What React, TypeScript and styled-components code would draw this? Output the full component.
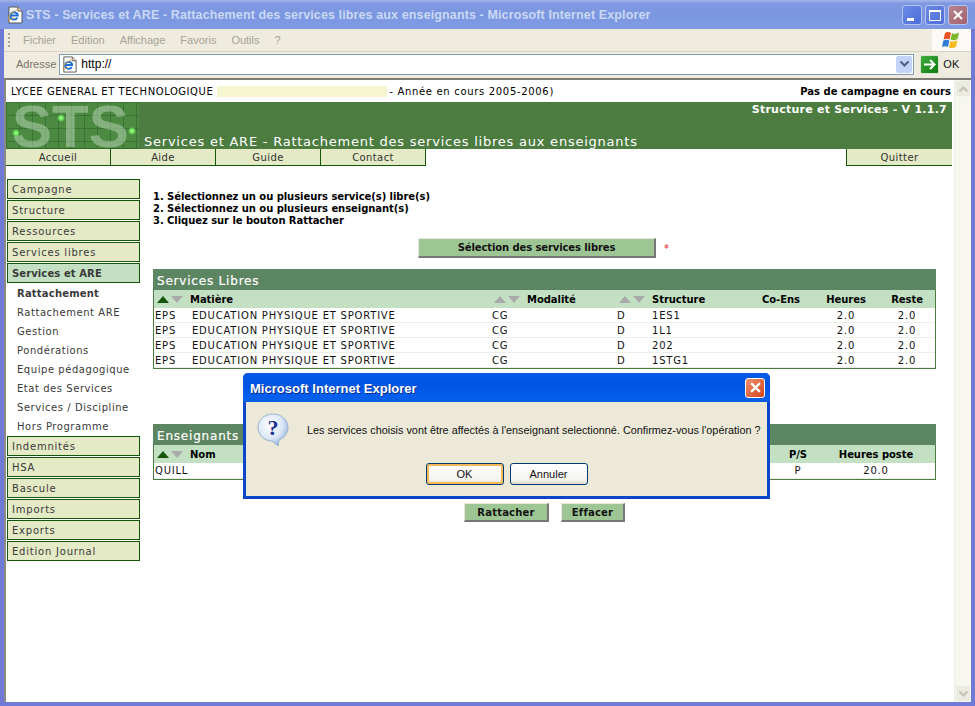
import React from "react";
import styled, { createGlobalStyle } from "styled-components";

const Global = createGlobalStyle`
  html, body { margin: 0; padding: 0; background: #fff; }
  * { box-sizing: border-box; }
`;

const PAGE_FONT = `"DejaVu Sans", Verdana, sans-serif`;
const UI_FONT = `"Liberation Sans", Arial, sans-serif`;

const Frame = styled.div`
  width: 975px;
  height: 706px;
  display: flex;
  flex-direction: column;
  background: #6f7ad6;
  padding: 0 4px 4px 4px;
  overflow: hidden;
  position: relative;
  font-family: ${PAGE_FONT};
`;

const TitleBar = styled.div`
  height: 29px;
  margin: 0 -4px;
  padding: 0 7px 0 6px;
  display: flex;
  align-items: center;
  background: linear-gradient(180deg, #a6b6ec 0, #7f98e2 12%, #7b97e0 50%, #7e9ae4 85%, #8199e2 100%);
`;

const TitleText = styled.div`
  margin-left: 2px;
  flex: 1;
  font: bold 12.5px ${UI_FONT};
  letter-spacing: 0.12px;
  color: #cbd8f4;
  white-space: nowrap;
`;

const WinControls = styled.div`
  display: flex;
  gap: 3px;
`;

const WinButton = styled.div<{ $close?: boolean }>`
  width: 20px;
  height: 20px;
  border: 1px solid #b4c4f2;
  border-radius: 3px;
  background: ${(p) => (p.$close ? "linear-gradient(135deg, #b5858f, #a4616f)" : "linear-gradient(135deg, #6a8be4, #4d6edb)")};
  display: flex;
  align-items: center;
  justify-content: center;
`;

const MenuBar = styled.div`
  height: 23px;
  display: flex;
  align-items: stretch;
  background: #efebde;
  border-bottom: 1px solid #d8d4c4;
`;

const Grip = styled.div`
  width: 2px;
  margin: 4px 0 4px 4px;
  background: repeating-linear-gradient(180deg, #a9a697 0 2px, transparent 2px 4px);
`;

const MenuItems = styled.div`
  flex: 1;
  display: flex;
  align-items: center;
  gap: 15px;
  padding-left: 13px;
  font: 11px ${UI_FONT};
  color: #a6a396;
`;

const FlagPane = styled.div`
  width: 39px;
  background: #fbfaf6;
  display: flex;
  align-items: center;
  justify-content: center;
`;

const AddressBar = styled.div`
  height: 26px;
  padding-bottom: 2px;
  display: flex;
  align-items: center;
  background: #efebde;
  font: 11px ${UI_FONT};
  color: #77756a;
`;

const AddressLabel = styled.span`
  margin: 0 3px 0 6px;
`;

const AddressField = styled.div`
  width: 855px;
  height: 21px;
  background: #fff;
  border: 1px solid #7f9db9;
  display: flex;
  align-items: center;
  padding-left: 1px;
  gap: 3px;
  color: #000;
  font-size: 12px;
`;

const UrlText = styled.span`
  flex: 1;
`;

const ComboArrow = styled.div`
  width: 16px;
  height: 17px;
  margin-right: 1px;
  background: #c3d3f8;
  border-radius: 2px;
  display: flex;
  align-items: center;
  justify-content: center;
`;

const GoButton = styled.div`
  margin-left: 6px;
  width: 19px;
  height: 19px;
  border-radius: 2px;
  background: linear-gradient(135deg, #3fae3f, #117a11);
  border: 1px solid #d6e6cd;
  display: flex;
  align-items: center;
  justify-content: center;
`;

const GoLabel = styled.span`
  margin-left: 4px;
  color: #111;
`;

const Viewport = styled.div`
  flex: 1;
  display: flex;
  min-height: 0;
  border-top: 2px solid #7c7b74;
  border-left: 2px solid #8a8a84;
  background: #fff;
`;

const Page = styled.div`
  flex: 1;
  min-width: 0;
  padding-right: 2px;
  background: #fff;
  display: flex;
  flex-direction: column;
`;

const InfoRow = styled.div`
  height: 22px;
  display: flex;
  align-items: center;
  padding-left: 5px;
  padding-right: 1px;
  font-size: 10px;
  letter-spacing: 0.55px;
  color: #000;
  white-space: nowrap;
`;

const Highlight = styled.span`
  width: 170px;
  height: 11px;
  background: #f5f6cf;
  margin: 0 2px 0 4px;
`;

const YearText = styled.span`
  letter-spacing: 0.68px;
`;

const CampaignNote = styled.span`
  margin-left: auto;
  font-weight: bold;
  letter-spacing: 0.02px;
`;

const Banner = styled.div`
  height: 47px;
  background: #4c7c40;
  display: flex;
  color: #fff;
`;

const LogoSvg = styled.svg`
  flex-shrink: 0;
  display: block;
`;

const BannerBody = styled.div`
  flex: 1;
  display: flex;
  flex-direction: column;
  padding: 1px 5px 0 5px;
`;

const Version = styled.div`
  text-align: right;
  font-size: 11px;
  font-weight: bold;
  letter-spacing: 0.25px;
  line-height: 13px;
`;

const BannerTitle = styled.div`
  margin-top: auto;
  font-size: 13px;
  line-height: 15px;
  letter-spacing: 0.77px;
  white-space: nowrap;
`;

const Nav = styled.div`
  height: 17px;
  display: flex;
  justify-content: space-between;
`;

const NavGroup = styled.div`
  display: flex;
`;

const NavTab = styled.div`
  width: 105px;
  background: #e4eac5;
  border-right: 1px solid #14550a;
  border-bottom: 1px solid #14550a;
  text-align: center;
  font-size: 10px;
  line-height: 18px;
  letter-spacing: 0.4px;
  color: #333;
`;

const QuitTab = styled(NavTab)`
  width: 106px;
  border-left: 1px solid #14550a;
  border-right: 0;
`;

const Columns = styled.div`
  flex: 1;
  display: flex;
`;

const Sidebar = styled.div`
  width: 133px;
  margin-left: 1px;
  padding-top: 13px;
  display: flex;
  flex-direction: column;
`;

const SideItem = styled.div<{ $active?: boolean }>`
  height: 20px;
  margin-bottom: 1px;
  border: 1px solid #14550a;
  background: ${(p) => (p.$active ? "#c3e0c3" : "#e4eac5")};
  padding-left: 4px;
  font-size: 10px;
  line-height: 20px;
  letter-spacing: ${(p) => (p.$active ? "0.1px" : "0.78px")};
  font-weight: ${(p) => (p.$active ? "bold" : "normal")};
  color: #3a3a3a;
  white-space: nowrap;
`;

const SubItem = styled.div<{ $active?: boolean }>`
  height: 19px;
  padding-left: 10px;
  font-size: 10px;
  line-height: 19px;
  letter-spacing: ${(p) => (p.$active ? "0.2px" : "0.55px")};
  font-weight: ${(p) => (p.$active ? "bold" : "normal")};
  color: #3a3a3a;
  white-space: nowrap;
`;

const Main = styled.div`
  width: 783px;
  margin-left: 13px;
  display: flex;
  flex-direction: column;
`;

const Steps = styled.div`
  margin-top: 25px;
  font-size: 10px;
  line-height: 12px;
  font-weight: bold;
  letter-spacing: -0.06px;
  color: #000;
`;

const SelectRow = styled.div`
  margin-top: 11px;
  padding-left: 265px;
  display: flex;
  align-items: center;
`;

const ActionButton = styled.div`
  background: #9ec695;
  border-top: 1px solid #e8e8e0;
  border-left: 1px solid #e8e8e0;
  border-right: 2px solid #777;
  border-bottom: 2px solid #777;
  font-size: 10px;
  font-weight: bold;
  letter-spacing: -0.1px;
  text-align: center;
  color: #111;
  white-space: nowrap;
`;

const SelectButton = styled(ActionButton)`
  width: 238px;
  height: 20px;
  line-height: 17px;
`;

const Star = styled.span`
  margin-left: 8px;
  color: #e01818;
  font-size: 10px;
`;

const Panel = styled.div<{ $top: number }>`
  margin-top: ${(p) => p.$top}px;
  border: 1px solid #4c7c40;
  border-top: 0;
`;

const PanelHead = styled.div`
  height: 21px;
  background: #5c8562;
  color: #fff;
  padding-left: 4px;
  font-size: 12px;
  line-height: 24px;
  letter-spacing: 0.8px;
  -webkit-text-stroke: 0.2px #fff;
  margin: 0 -1px;
`;

const serviceGrid = "36px 302px 125px 35px 98px 62px 68px 54px";
const teacherGrid = "36px 580px 56px 100px 10px";

const TableRow = styled.div<{ $grid: string }>`
  display: grid;
  grid-template-columns: ${(p) => p.$grid};
  height: 15px;
  border-bottom: 1px solid #eceeea;
  align-items: center;
  font-size: 10px;
  letter-spacing: 0.79px;
  color: #111;
  white-space: nowrap;
`;

const TeacherRow = styled(TableRow)`
  height: 16px;
`;

const HeaderRow = styled(TableRow)`
  height: 18px;
  background: #c3e0c3;
  border-bottom: 0;
  font-weight: bold;
  letter-spacing: -0.05px;
  color: #000;
`;

const Cell = styled.div<{ $center?: boolean; $pad?: number }>`
  text-align: ${(p) => (p.$center ? "center" : "left")};
  padding-left: ${(p) => p.$pad ?? 0}px;
`;

const Sorter = styled.div<{ $pad?: number }>`
  display: flex;
  gap: 2px;
  padding-left: ${(p) => p.$pad ?? 3}px;
`;

const Triangle = styled.i<{ $down?: boolean; $on?: boolean }>`
  width: 0;
  height: 0;
  border-left: 6.5px solid transparent;
  border-right: 6.5px solid transparent;
  ${(p) =>
    p.$down
      ? `border-top: 7px solid ${p.$on ? "#14550a" : "#aaa"};`
      : `border-bottom: 7px solid ${p.$on ? "#14550a" : "#aaa"};`}
`;

const CellWithSort = styled.div`
  display: flex;
  align-items: center;
`;

const BottomActions = styled.div`
  margin-top: 23px;
  padding-left: 311px;
  display: flex;
  gap: 12px;
`;

const RattachButton = styled(ActionButton)<{ $w: number }>`
  width: ${(p) => p.$w}px;
  height: 19px;
  line-height: 17px;
  letter-spacing: 0.2px;
`;

const Scrollbar = styled.div`
  width: 17px;
  background: #f8f7ef;
  border-left: 1px solid #eeede4;
  display: flex;
  flex-direction: column;
  justify-content: space-between;
`;

const ScrollButton = styled.div`
  height: 17px;
  background: #ecebe2;
  border: 1px solid #f6f6f0;
  border-radius: 2px;
  display: flex;
  align-items: center;
  justify-content: center;
`;

const Dialog = styled.div`
  position: absolute;
  left: 243px;
  top: 373px;
  width: 527px;
  height: 126px;
  background: #0a4fd8;
  border: 3px solid #0a46c8;
  border-top: 0;
  border-radius: 5px 5px 0 0;
  display: flex;
  flex-direction: column;
  font-family: ${UI_FONT};
`;

const DialogTitle = styled.div`
  height: 29px;
  margin: 0 -3px;
  padding: 2px 5px 0 7px;
  border-radius: 5px 5px 0 0;
  background: linear-gradient(180deg, #0a5ae8 0, #0358e6 10%, #0054e3 50%, #0560ee 85%, #0a5ce0 100%);
  display: flex;
  align-items: center;
  justify-content: space-between;
  color: #fff;
  font: bold 13px ${UI_FONT};
  letter-spacing: 0.02px;
  text-shadow: 1px 1px 0 #0a2f90;
`;

const DialogClose = styled.div`
  width: 20px;
  height: 20px;
  margin-top: -2px;
  border: 1px solid #fff;
  border-radius: 3px;
  background: linear-gradient(135deg, #ee9070, #d5431a);
  display: flex;
  align-items: center;
  justify-content: center;
`;

const DialogBody = styled.div`
  flex: 1;
  background: #ece9d8;
  display: flex;
  flex-direction: column;
`;

const Message = styled.div`
  display: flex;
  align-items: center;
  padding-left: 11px;
  height: 56px;
  font-size: 10.85px;
  color: #111;
  white-space: nowrap;
`;

const QuestionBox = styled.div`
  flex-shrink: 0;
  width: 33px;
  height: 34px;
`;

const MessageText = styled.span`
  margin-left: 17px;
`;

const DialogButtons = styled.div`
  display: flex;
  justify-content: center;
  gap: 6px;
  margin-top: 5px;
`;

const XpButton = styled.div<{ $focus?: boolean }>`
  width: 78px;
  height: 22px;
  border: 1px solid #003c74;
  border-radius: 3px;
  background: linear-gradient(180deg, #fff, #f4f3ee 80%, #dcd8cc);
  font-size: 11px;
  line-height: 20px;
  text-align: center;
  color: #111;
  box-shadow: ${(p) => (p.$focus ? "inset 0 0 0 2px #f6b956" : "none")};
`;

function StsLogo() {
  return (
    <LogoSvg width="133" height="47" viewBox="0 0 133 47">
      <defs>
        <pattern id="stsgrid" width="13" height="13" patternUnits="userSpaceOnUse">
          <rect width="13" height="13" fill="#4c8a42" />
          <path d="M0 .5h13M.5 0v13" stroke="#3a7434" strokeWidth="1" />
        </pattern>
        <radialGradient id="stsdot">
          <stop offset="0" stopColor="#a8ff90" />
          <stop offset="0.5" stopColor="#70e860" />
          <stop offset="1" stopColor="#70e860" stopOpacity="0" />
        </radialGradient>
      </defs>
      <rect width="133" height="47" fill="url(#stsgrid)" />
      <text x="6" y="45" fontFamily="Liberation Sans, Arial, sans-serif" fontWeight="bold" fontSize="60" fill="#bed7b9" fillOpacity="0.5">STS</text>
      <circle cx="55" cy="16" r="4" fill="url(#stsdot)" />
      <circle cx="10" cy="31" r="4" fill="url(#stsdot)" />
      <circle cx="126" cy="29" r="4" fill="url(#stsdot)" />
      <path d="M0 46.500h133" stroke="#2f6a28" />
    </LogoSvg>
  );
}

function IeIcon({ size = 18 }: { size?: number }) {
  return (
    <svg width={size} height={size} viewBox="0 0 18 18">
      <path d="M3 1h9l4 4v12H3z" fill="#fff" stroke="#555" strokeWidth="1" />
      <path d="M12 1v4h4" fill="#ddd" stroke="#555" strokeWidth="1" />
      <path d="M4.200 9.600h7.600c0-3-4.600-4.600-6.600-2-1.900 2.600-.4 6 2.600 6 1.600 0 3-.8 3.600-2" fill="none" stroke="#1e6fd8" strokeWidth="2" />
      <path d="M2 13c1-4 6-9 11-9.600M1.600 14c.6 1.400 4-1 6-3" fill="none" stroke="#e0a030" strokeWidth="0.9" />
    </svg>
  );
}

function FlagIcon() {
  return (
    <svg width="21" height="18" viewBox="0 0 21 18">
      <path d="M4 2c2.400-1.400 4.200-1 6 0L8.600 8.500c-1.800-1-3.600-1.200-6 0z" fill="#e8501f" />
      <path d="M11 2.200c2 1 4 1 7-.6l-1.400 6.400c-2.800 1.400-4.600 1.600-7 .6z" fill="#7cb82a" />
      <path d="M2.400 9.500c2.200-1.200 4-1 6 0L7 16c-1.800-1-3.600-1.200-6 0z" fill="#2f7fd8" />
      <path d="M9.400 9.900c2.400 1 4.200.8 7-.6L15 15.800c-2.800 1.400-4.600 1.600-7 .6z" fill="#f5b81f" />
    </svg>
  );
}

const questionFont = `"Liberation Serif", serif`;

function QuestionIcon() {
  return (
    <svg width="33" height="34" viewBox="0 0 33 34">
      <defs>
        <radialGradient id="qb" cx="0.4" cy="0.35" r="0.7">
          <stop offset="0" stopColor="#ffffff" />
          <stop offset="0.6" stopColor="#dbe7f8" />
          <stop offset="1" stopColor="#8fb0dc" />
        </radialGradient>
      </defs>
      <path d="M16 1C7.500 1 1 7 1 14.500S7.500 28 15 28l6 5 1-6c5.500-2 9-7 9-12.500C31 7 24.500 1 16 1z" fill="url(#qb)" stroke="#9db3cf" strokeWidth="1" />
      <text x="16" y="22" textAnchor="middle" fontFamily={questionFont} fontWeight="bold" fontSize="22" fill="#1c2f90">?</text>
    </svg>
  );
}

const Chevron = ({ up, color }: { up?: boolean; color: string }) => (
  <svg width="11" height="8" viewBox="0 0 11 8">
    <path d={up ? "M1.500 6.500L5.500 2.500L9.500 6.500" : "M1.500 1.500L5.500 5.500L9.500 1.500"} fill="none" stroke={color} strokeWidth="2.200" />
  </svg>
);

const XMark = ({ size = 10, color = "#fff" }: { size?: number; color?: string }) => (
  <svg width={size} height={size} viewBox="0 0 10 10">
    <path d="M1 1L9 9M9 1L1 9" stroke={color} strokeWidth="2" />
  </svg>
);

const services = ["1ES1", "1L1", "202", "1STG1"];
const topMenu = ["Campagne", "Structure", "Ressources", "Services libres"];
const subMenu = ["Rattachement ARE", "Gestion", "Pondérations", "Equipe pédagogique", "Etat des Services", "Services / Discipline", "Hors Programme"];
const bottomMenu = ["Indemnités", "HSA", "Bascule", "Imports", "Exports", "Edition Journal"];

export default function App() {
  return (
    <>
      <Global />
      <Frame>
        <TitleBar>
          <IeIcon />
          <TitleText>STS - Services et ARE - Rattachement des services libres aux enseignants - Microsoft Internet Explorer</TitleText>
          <WinControls>
            <WinButton>
              <svg width="12" height="12" viewBox="0 0 12 12"><rect x="1" y="9" width="7" height="3" fill="#fff" /></svg>
            </WinButton>
            <WinButton>
              <svg width="12" height="12" viewBox="0 0 12 12"><path d="M.5 2.500h11v9H.5z" fill="none" stroke="#fff" /><rect x="0" y="1" width="12" height="2" fill="#fff" /></svg>
            </WinButton>
            <WinButton $close><XMark /></WinButton>
          </WinControls>
        </TitleBar>
        <MenuBar>
          <Grip />
          <MenuItems>
            <span>Fichier</span><span>Edition</span><span>Affichage</span><span>Favoris</span><span>Outils</span><span>?</span>
          </MenuItems>
          <FlagPane><FlagIcon /></FlagPane>
        </MenuBar>
        <AddressBar>
          <Grip />
          <AddressLabel>Adresse</AddressLabel>
          <AddressField>
            <IeIcon size={17} />
            <UrlText>http://</UrlText>
            <ComboArrow><Chevron color="#4d6185" /></ComboArrow>
          </AddressField>
          <GoButton>
            <svg width="13" height="13" viewBox="0 0 13 13"><path d="M1 6.500h10M7 2l4.500 4.500L7 11" fill="none" stroke="#fff" strokeWidth="2" /></svg>
          </GoButton>
          <GoLabel>OK</GoLabel>
        </AddressBar>
        <Viewport>
          <Page>
            <InfoRow>
              LYCEE GENERAL ET TECHNOLOGIQUE
              <Highlight />
              <YearText>- Année en cours 2005-2006)</YearText>
              <CampaignNote>Pas de campagne en cours</CampaignNote>
            </InfoRow>
            <Banner>
              <StsLogo />
              <BannerBody>
                <Version>Structure et Services - V 1.1.7</Version>
                <BannerTitle>Services et ARE - Rattachement des services libres aux enseignants</BannerTitle>
              </BannerBody>
            </Banner>
            <Nav>
              <NavGroup>
                <NavTab>Accueil</NavTab>
                <NavTab>Aide</NavTab>
                <NavTab>Guide</NavTab>
                <NavTab>Contact</NavTab>
              </NavGroup>
              <QuitTab>Quitter</QuitTab>
            </Nav>
            <Columns>
              <Sidebar>
                {topMenu.map((m) => <SideItem key={m}>{m}</SideItem>)}
                <SideItem $active>Services et ARE</SideItem>
                <div>
                  <SubItem $active>Rattachement</SubItem>
                  {subMenu.map((m) => <SubItem key={m}>{m}</SubItem>)}
                </div>
                {bottomMenu.map((m) => <SideItem key={m}>{m}</SideItem>)}
              </Sidebar>
              <Main>
                <Steps>
                  <div>1. Sélectionnez un ou plusieurs service(s) libre(s)</div>
                  <div>2. Sélectionnez un ou plusieurs enseignant(s)</div>
                  <div>3. Cliquez sur le bouton Rattacher</div>
                </Steps>
                <SelectRow>
                  <SelectButton>Sélection des services libres</SelectButton>
                  <Star>*</Star>
                </SelectRow>
                <Panel $top={11}>
                  <PanelHead>Services Libres</PanelHead>
                  <HeaderRow $grid={serviceGrid}>
                    <Sorter><Triangle $on /><Triangle $down /></Sorter>
                    <Cell>Matière</Cell>
                    <CellWithSort>
                      <Sorter $pad={2}><Triangle /><Triangle $down /></Sorter>
                      <Cell $pad={7}>Modalité</Cell>
                    </CellWithSort>
                    <Sorter $pad={2}><Triangle /><Triangle $down /></Sorter>
                    <Cell>Structure</Cell>
                    <Cell $center>Co-Ens</Cell>
                    <Cell $center>Heures</Cell>
                    <Cell $center>Reste</Cell>
                  </HeaderRow>
                  {services.map((s) => (
                    <TableRow $grid={serviceGrid} key={s}>
                      <Cell $pad={1}>EPS</Cell>
                      <Cell $pad={2}>EDUCATION PHYSIQUE ET SPORTIVE</Cell>
                      <Cell>CG</Cell>
                      <Cell>D</Cell>
                      <Cell>{s}</Cell>
                      <Cell />
                      <Cell $center>2.0</Cell>
                      <Cell $center>2.0</Cell>
                    </TableRow>
                  ))}
                </Panel>
                <Panel $top={55}>
                  <PanelHead>Enseignants</PanelHead>
                  <HeaderRow $grid={teacherGrid}>
                    <Sorter><Triangle $on /><Triangle $down /></Sorter>
                    <Cell>Nom</Cell>
                    <Cell $center>P/S</Cell>
                    <Cell $center>Heures poste</Cell>
                    <Cell />
                  </HeaderRow>
                  <TeacherRow $grid={teacherGrid}>
                    <Cell $pad={1}>QUILL</Cell>
                    <Cell />
                    <Cell $center>P</Cell>
                    <Cell $center>20.0</Cell>
                    <Cell />
                  </TeacherRow>
                </Panel>
                <BottomActions>
                  <RattachButton $w={85}>Rattacher</RattachButton>
                  <RattachButton $w={64}>Effacer</RattachButton>
                </BottomActions>
              </Main>
            </Columns>
          </Page>
          <Scrollbar>
            <ScrollButton><Chevron up color="#c4c3b8" /></ScrollButton>
            <ScrollButton><Chevron color="#c4c3b8" /></ScrollButton>
          </Scrollbar>
        </Viewport>
        <Dialog>
          <DialogTitle>
            Microsoft Internet Explorer
            <DialogClose><XMark size={11} /></DialogClose>
          </DialogTitle>
          <DialogBody>
            <Message>
              <QuestionBox><QuestionIcon /></QuestionBox>
              <MessageText>Les services choisis vont être affectés à l'enseignant selectionné. Confirmez-vous l'opération ?</MessageText>
            </Message>
            <DialogButtons>
              <XpButton $focus>OK</XpButton>
              <XpButton>Annuler</XpButton>
            </DialogButtons>
          </DialogBody>
        </Dialog>
      </Frame>
    </>
  );
}
